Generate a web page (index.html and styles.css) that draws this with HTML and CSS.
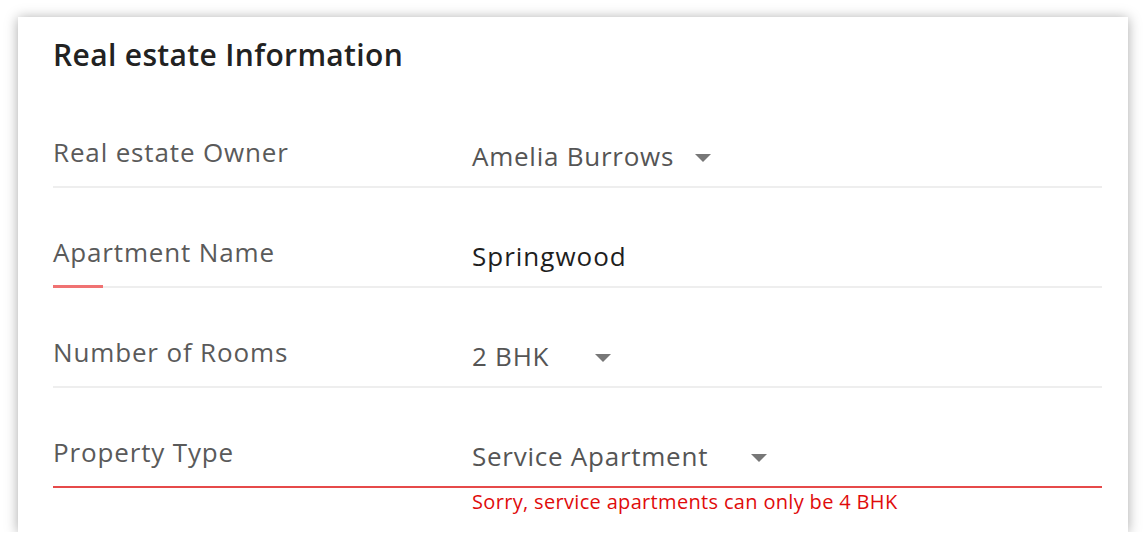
FILE: index.html
```html
<!DOCTYPE html>
<html lang="en">
<head>
<meta charset="utf-8">
<title>Real estate Information</title>
<link rel="stylesheet" href="styles.css">
</head>
<body>
<div class="card">
  <h1 class="title">Real estate Information</h1>
  <div class="row">
    <div class="label">Real estate Owner</div>
    <div class="value">
      <span>Amelia Burrows</span>
      <span class="caret gap-sm"></span>
    </div>
  </div>
  <div class="row row-focus">
    <div class="label">Apartment Name</div>
    <div class="value value-dark">Springwood</div>
  </div>
  <div class="row">
    <div class="label">Number of Rooms</div>
    <div class="value">
      <span>2 BHK</span>
      <span class="caret gap-lg"></span>
    </div>
  </div>
  <div class="row row-error">
    <div class="label">Property Type</div>
    <div class="value">
      <span>Service Apartment</span>
      <span class="caret gap-md"></span>
    </div>
  </div>
  <div class="error">Sorry, service apartments can only be 4 BHK</div>
</div>
</body>
</html>
```

FILE: styles.css
```css
html, body {
  margin: 0;
  padding: 0;
  background: #ffffff;
}

body {
  font-family: "Open Sans", "Liberation Sans", sans-serif;
  padding: 17px 18px 0 18px;
}

.card {
  width: 1110px;
  height: 515px;
  box-sizing: border-box;
  background: #ffffff;
  box-shadow: 0 1px 12px rgba(0, 0, 0, 0.34);
  padding: 20px 26px 0 35px;
}

.title {
  margin: 0 0 15px 0;
  font-size: 30px;
  line-height: 36px;
  font-weight: 600;
  letter-spacing: 0.35px;
  color: #222222;
}

.row {
  position: relative;
  display: flex;
  align-items: flex-end;
  height: 98px;
  border-bottom: 2px solid #eeeeee;
}

.label {
  width: 419px;
  flex: none;
  font-size: 26px;
  line-height: 30px;
  letter-spacing: 0.85px;
  color: #5a5a5a;
  padding-bottom: 19px;
}

.value {
  display: flex;
  align-items: center;
  font-size: 26px;
  line-height: 30px;
  letter-spacing: 0.75px;
  color: #555555;
  padding-bottom: 15px;
}

.value-dark {
  color: #1e1e1e;
  letter-spacing: 1px;
}

.caret {
  width: 0;
  height: 0;
  border-left: 8px solid transparent;
  border-right: 8px solid transparent;
  border-top: 8px solid #777777;
  margin-top: 4px;
}

.gap-sm { margin-left: 21px; }
.gap-md { margin-left: 43px; }
.gap-lg { margin-left: 46px; }

.row-focus::after {
  content: "";
  position: absolute;
  left: 0;
  bottom: -2px;
  width: 50px;
  height: 3px;
  background: #f07272;
}

.row-error {
  border-bottom-color: #e64a4a;
}

.error {
  margin: 2px 0 0 419px;
  font-size: 20px;
  line-height: 24px;
  letter-spacing: 0.33px;
  color: #e00b0b;
}
```
